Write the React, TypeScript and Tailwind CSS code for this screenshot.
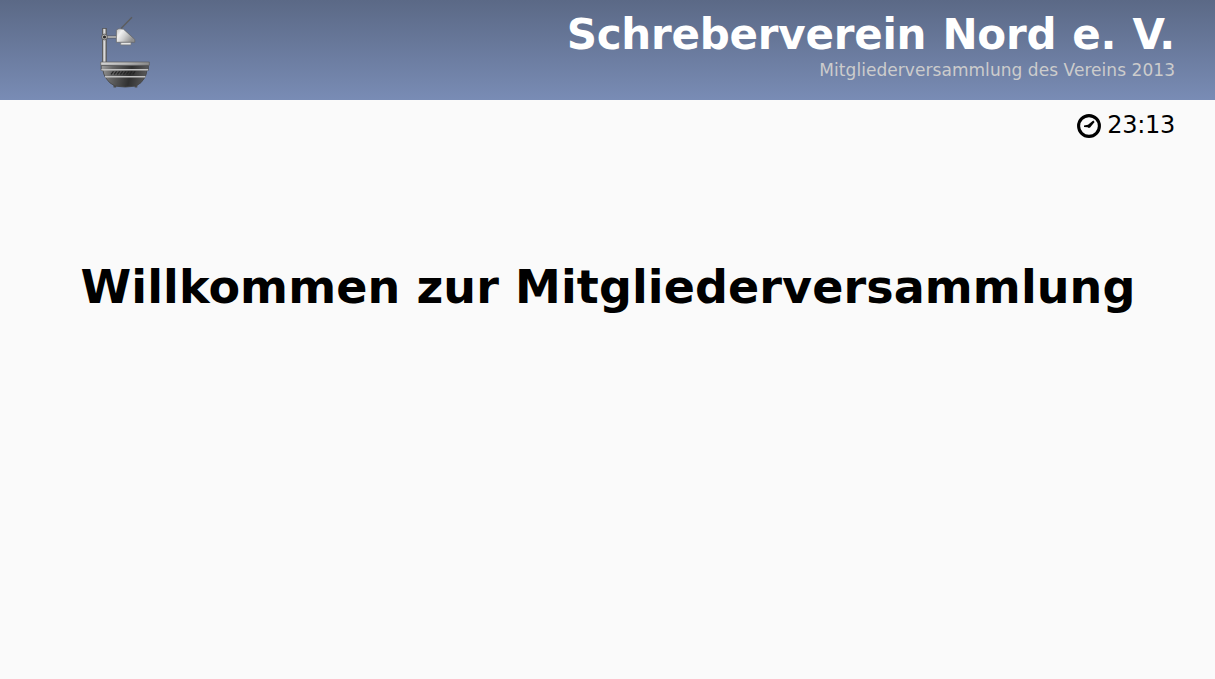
function ProjectorLogo() {
  return (
    <svg width="56" height="76" viewBox="0 0 56 76" aria-hidden="true">
      <defs>
        <linearGradient id="pole" x1="0" x2="1" y1="0" y2="0">
          <stop offset="0" stopColor="#888" />
          <stop offset="0.45" stopColor="#e6e6e6" />
          <stop offset="1" stopColor="#777" />
        </linearGradient>
        <linearGradient id="head" x1="0" x2="1" y1="0" y2="0.5">
          <stop offset="0" stopColor="#bbb" />
          <stop offset="0.3" stopColor="#f0f0f0" />
          <stop offset="0.6" stopColor="#cecece" />
          <stop offset="1" stopColor="#909090" />
        </linearGradient>
        <linearGradient id="bowl" x1="0" x2="1" y1="0" y2="0.1">
          <stop offset="0" stopColor="#a0a0a0" />
          <stop offset="0.25" stopColor="#666" />
          <stop offset="0.65" stopColor="#303030" />
          <stop offset="1" stopColor="#5a5a5a" />
        </linearGradient>
        <linearGradient id="rim" x1="0" x2="1" y1="0" y2="0">
          <stop offset="0" stopColor="#d4d4d4" />
          <stop offset="0.5" stopColor="#b8b8b8" />
          <stop offset="1" stopColor="#8a8a8a" />
        </linearGradient>
      </defs>
      <path d="M23 16.5 34 5.3" stroke="#5c5c5c" strokeWidth="1.3" />
      <rect x="4.6" y="16.4" width="3.7" height="34" fill="url(#pole)" stroke="#555" strokeWidth="0.8" />
      <rect x="7" y="24" width="12" height="2" fill="#d4d4d4" stroke="#555" strokeWidth="0.7" />
      <circle cx="6.5" cy="25" r="2.9" fill="#b8b8b8" stroke="#444" strokeWidth="0.7" />
      <circle cx="6.5" cy="25" r="1.6" fill="#2c2c2c" />
      <path d="M18.4 18.5Q19.5 16.2 22 16.8L25.5 17.2 36.8 27.4V30.3H18.4Z" fill="url(#head)" stroke="#666" strokeWidth="0.7" />
      <path d="M22.7 30.4H33V32.9H22.7Z" fill="#e6e6e6" stroke="#777" strokeWidth="0.7" />
      <path d="M16.8 72v3.4M38 72v3.4" stroke="#4c4c4c" strokeWidth="2.6" />
      <path d="M3.2 53.5H50.4V58.3H48.9Q48.6 62 46.9 65.5Q43.5 71.5 38 74.1Q27 76 17 74.1Q11 71.5 7.5 65.5Q5.3 62 5 58.3H3.2Z" fill="url(#bowl)" stroke="#444" strokeWidth="0.8" />
      <path d="M2.7 50H51.3V53.3H2.7Z" fill="url(#rim)" stroke="#5c5c5c" strokeWidth="0.7" />
      <path d="M3.4 57H50.2V58.4H3.4ZM7 64H47.4V65.4H7Z" fill="#c0c0c0" />
      <path d="M13 62.3l2.5-3m.6 3 2.5-3m.6 3 2.5-3m.6 3 2.5-3m.6 3 2.5-3m.6 3 2.5-3m.6 3 2.5-3m.6 3 2.5-3" stroke="#242424" strokeWidth="1.2" fill="none" />
    </svg>
  );
}

function ClockIcon() {
  return (
    <svg width="24" height="24" viewBox="0 0 24 24" aria-hidden="true">
      <circle cx="12" cy="12" r="10.4" fill="none" stroke="#000" strokeWidth="3.1" />
      <path d="M7 11.4 11 10.7 16.3 6.6 17.6 7.9 13.9 12.6A1.9 1.9 0 0 1 10.7 13.3L7 12.9Z" fill="#000" />
    </svg>
  );
}

export default function App() {
  return (
    <div className="flex h-[679px] w-full flex-col overflow-hidden bg-[#fafafa] font-['DejaVu_Sans',sans-serif] text-black">
      <header className="flex h-[100px] shrink-0 items-start justify-between bg-linear-to-b from-[#5b6986] to-[#798cb5] pr-10 pl-[98px]">
        <div className="pt-3">
          <ProjectorLogo />
        </div>
        <div className="text-right whitespace-nowrap">
          <h1 className="pt-[10px] text-[42px] leading-[50px] font-bold tracking-[-0.23px] text-white [word-spacing:1.7px]">
            Schreberverein Nord e. V.
          </h1>
          <p className="-mt-px text-[17px] leading-[22px] tracking-[0.05px] text-[#cccccc]">
            Mitgliederversammlung des Vereins 2013
          </p>
        </div>
      </header>
      <main className="flex flex-col">
        <div className="flex justify-end gap-[6px] pt-[10px] pr-10">
          <div className="pt-1">
            <ClockIcon />
          </div>
          <time className="text-[24px] leading-[30px] tracking-[-0.27px]">23:13</time>
        </div>
        <h2 className="mt-[117px] pl-px text-center text-[46px] leading-[60px] font-bold tracking-[0.1px] whitespace-nowrap">
          Willkommen zur Mitgliederversammlung
        </h2>
      </main>
    </div>
  );
}
